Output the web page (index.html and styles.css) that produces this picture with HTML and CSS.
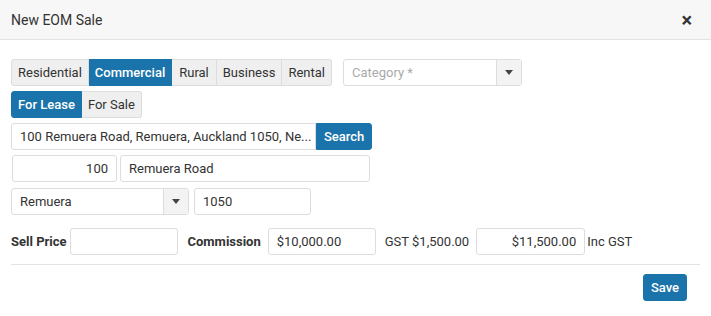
FILE: index.html
```html
<!DOCTYPE html>
<html lang="en">
<head>
    <meta charset="UTF-8">
    <title>New EOM Sale</title>
    <link rel="stylesheet" href="styles.css">
</head>
<body>
    <div class="modal">
        <div class="modal-header">
            <div class="modal-title">New EOM Sale</div>
            <div class="close-btn">&times;</div>
        </div>
        <div class="modal-body">
            <div class="row">
                <div class="btn-group">
                    <div class="btn">Residential</div>
                    <div class="btn active">Commercial</div>
                    <div class="btn wide">Rural</div>
                    <div class="btn">Business</div>
                    <div class="btn">Rental</div>
                </div>
                <div class="select category">
                    <div class="select-value placeholder">Category *</div>
                    <div class="select-arrow"><span class="caret"></span></div>
                </div>
            </div>
            <div class="row">
                <div class="btn-group">
                    <div class="btn active">For Lease</div>
                    <div class="btn">For Sale</div>
                </div>
            </div>
            <div class="row">
                <div class="input-group">
                    <div class="input address">100 Remuera Road, Remuera, Auckland 1050, Ne...</div>
                    <div class="btn primary">Search</div>
                </div>
            </div>
            <div class="row tight">
                <div class="input street-no">100</div>
                <div class="input street">Remuera Road</div>
            </div>
            <div class="row">
                <div class="select suburb">
                    <div class="select-value">Remuera</div>
                    <div class="select-arrow"><span class="caret"></span></div>
                </div>
                <div class="input postcode">1050</div>
            </div>
            <div class="row price-row">
                <label class="label">Sell Price</label>
                <div class="input price"></div>
                <label class="label commission-label">Commission</label>
                <div class="input price">$10,000.00</div>
                <span class="text gst">GST $1,500.00</span>
                <div class="input price right">$11,500.00</div>
                <span class="text">Inc GST</span>
            </div>
        </div>
        <div class="modal-footer">
            <div class="btn primary">Save</div>
        </div>
    </div>
</body>
</html>
```

FILE: styles.css
```css
* { margin: 0; padding: 0; box-sizing: border-box; }
body {
    font-family: Roboto, "Liberation Sans", sans-serif;
    font-size: 13px;
    color: #333;
    background: #fff;
}
.modal { width: 711px; }
.modal-header {
    height: 40px;
    background: #f7f7f7;
    border-bottom: 1px solid #e3e3e3;
    display: flex;
    align-items: center;
    justify-content: space-between;
    padding: 0 19px 0 11px;
}
.modal-title { font-size: 14px; color: #333; }
.close-btn { font-size: 20px; font-weight: bold; color: #333; line-height: 1; }
.modal-body { padding: 19px 11px 0; }
.row { display: flex; align-items: center; margin-bottom: 5px; }
.row.tight { margin-left: 1px; margin-bottom: 6px; }
.btn-group { display: flex; }
.btn {
    height: 27px;
    line-height: 25px;
    padding: 0 7px;
    border: 1px solid #ddd;
    background: #efefef;
    color: #333;
    white-space: nowrap;
}
.btn-group .btn { padding: 0 6px; }
.btn-group .btn.wide { padding: 0 7px; }
.btn-group .btn + .btn { border-left: none; }
.btn-group .btn:first-child { border-radius: 3px 0 0 3px; }
.btn-group .btn:last-child { border-radius: 0 3px 3px 0; }
.btn.active, .btn.primary {
    background: #1a73aa;
    border-color: #1a73aa;
    color: #fff;
    font-weight: 500;
}
.btn.primary { border-radius: 3px; }
.select {
    display: flex;
    height: 27px;
    border: 1px solid #ddd;
    border-radius: 3px;
}
.select-value { flex: 1; padding: 0 8px; line-height: 25px; }
.placeholder { color: #aaa; }
.select-arrow {
    width: 25px;
    background: #f3f3f3;
    border-left: 1px solid #ddd;
    display: flex;
    align-items: center;
    justify-content: center;
}
.caret {
    width: 0;
    height: 0;
    border-left: 4px solid transparent;
    border-right: 4px solid transparent;
    border-top: 5px solid #444;
}
.category { width: 179px; margin-left: 11px; }
.input {
    height: 27px;
    line-height: 25px;
    border: 1px solid #ddd;
    border-radius: 3px;
    padding: 0 8px;
    white-space: nowrap;
    overflow: hidden;
}
.input-group { display: flex; }
.input-group .input { border-radius: 3px 0 0 3px; }
.input-group .btn { border-radius: 0 3px 3px 0; }
.address { width: 305px; }
.street-no { width: 105px; text-align: right; }
.street { width: 250px; margin-left: 3px; }
.suburb { width: 178px; }
.postcode { width: 117px; margin-left: 5px; }
.price-row { margin-top: 13px; margin-bottom: 0; padding-bottom: 9px; border-bottom: 1px solid #e3e3e3; }
.label { font-weight: bold; margin-right: 3px; }
.price { width: 108px; }
.price.right { text-align: right; width: 109px; }
.commission-label { margin-left: 10px; margin-right: 7px; }
.text { margin-left: 2px; }
.gst { margin: 0 7px 0 9px; }
.modal-footer { display: flex; justify-content: flex-end; padding: 9px 24px 0 0; }
.modal-footer .btn { height: 27px; line-height: 25px; }
```
